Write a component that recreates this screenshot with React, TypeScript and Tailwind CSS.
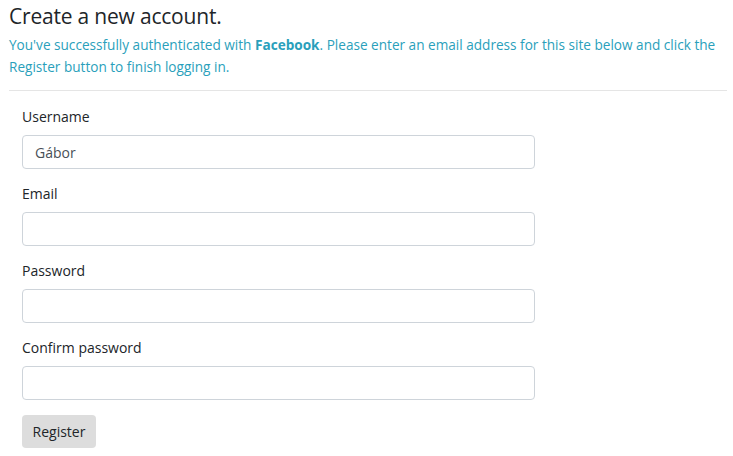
import React from "react";

const fields = [
  { label: "Username", value: "Gábor" },
  { label: "Email", value: "" },
  { label: "Password", value: "" },
  { label: "Confirm password", value: "" },
];

export default function App() {
  return (
    <div
      className="w-[733px] h-[456px] bg-white px-[9px] pt-[2px]"
      style={{ fontFamily: '"Open Sans", "Noto Sans", sans-serif' }}
    >
      <h1 className="text-[21px] leading-[28px] font-normal text-[#212529] tracking-[-0.2px]">Create a new account.</h1>
      <p className="mt-[4px] text-[13.6px] leading-[22px] text-[#2a9fbb]">
        You've successfully authenticated with <strong className="font-bold">Facebook</strong>. Please enter an email address for this site below and click the Register button to finish logging in.
      </p>
      <hr className="mt-[12px] -mr-[3px] border-t border-[#e5e5e5]" />
      <form className="pl-[13px] pt-[16px] w-[526px] flex flex-col">
        {fields.map((f) => (
          <div key={f.label} className="flex flex-col mb-[15px]">
            <label className="text-[14px] leading-[20px] text-[#212529] mb-[8px]">{f.label}</label>
            <div className="h-[34px] rounded-[4px] border border-[#ced4da] px-[12px] flex items-center text-[14px] text-[#495057]">
              {f.value}
            </div>
          </div>
        ))}
        <div>
          <button type="button" className="h-[33px] w-[74px] rounded-[4px] bg-[#dddddd] text-[14px] text-[#212529]">
            Register
          </button>
        </div>
      </form>
    </div>
  );
}
